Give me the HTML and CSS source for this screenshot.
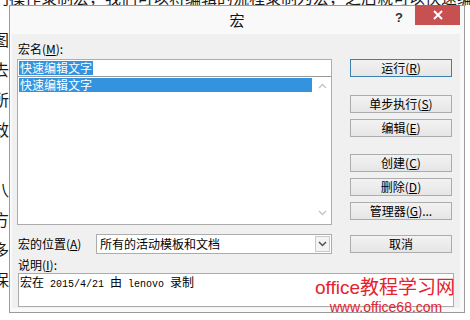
FILE: index.html
```html
<!DOCTYPE html>
<html lang="zh">
<head>
<meta charset="utf-8">
<title>宏</title>
<link rel="stylesheet" href="styles.css">
</head>
<body>
<div class="doc">
  <p class="doc-line top-line">门操作录制宏，我们可以将编辑的流程录制为宏，之后就可以快速编辑文字了。</p>
  <p class="doc-line">图</p>
  <p class="doc-line">去</p>
  <p class="doc-line">所</p>
  <p class="doc-line">效</p>
  <p class="doc-line">：</p>
  <p class="doc-line">八</p>
  <p class="doc-line">方</p>
  <p class="doc-line">多</p>
  <p class="doc-line">保</p>
</div>

<div class="dialog">
  <div class="titlebar">
    <span class="title">宏</span>
    <span class="help">?</span>
    <span class="close">
      <svg width="10" height="10" viewBox="0 0 10 10"><path d="M1 1L9 9M9 1L1 9" stroke="#fff" stroke-width="2" fill="none"/></svg>
    </span>
  </div>
  <div class="client">
    <div class="left-col">
      <div class="lbl name-lbl">宏名(<u>M</u>):</div>
      <div class="name-input"><span class="sel">快速编辑文字</span></div>
      <div class="list">
        <div class="list-items">
          <div class="list-item selected">快速编辑文字</div>
        </div>
        <div class="scrollbar">
          <svg class="arrow" width="9" height="6" viewBox="0 0 9 6"><path d="M1 5L4.5 1.5L8 5" stroke="#c4c4c4" stroke-width="1.4" fill="none"/></svg>
          <svg class="arrow" width="9" height="6" viewBox="0 0 9 6"><path d="M1 1L4.5 4.5L8 1" stroke="#c4c4c4" stroke-width="1.4" fill="none"/></svg>
        </div>
      </div>
    </div>
    <div class="right-col">
      <div class="btn default">运行(<u>R</u>)</div>
      <div class="btn gap-lg">单步执行(<u>S</u>)</div>
      <div class="btn">编辑(<u>E</u>)</div>
      <div class="btn gap-lg">创建(<u>C</u>)</div>
      <div class="btn">删除(<u>D</u>)</div>
      <div class="btn">管理器(<u>G</u>)...</div>
    </div>
    <div class="loc-row">
      <span class="lbl loc-lbl">宏的位置(<u>A</u>)</span>
      <div class="combo">
        <span class="combo-text">所有的活动模板和文档</span>
        <span class="combo-btn">
          <svg width="9" height="6" viewBox="0 0 9 6"><path d="M1 1L4.5 4.5L8 1" stroke="#505050" stroke-width="1.5" fill="none"/></svg>
        </span>
      </div>
    </div>
    <div class="cancel-cell">
      <div class="btn">取消</div>
    </div>
    <div class="desc-area">
      <div class="lbl desc-lbl">说明(<u>I</u>):</div>
      <div class="desc-box">宏在<span class="mono"> 2015/4/21 </span>由<span class="mono"> lenovo </span>录制</div>
    </div>
  </div>
  <div class="watermark">
    <div class="wm-big">office教程学习网</div>
    <div class="wm-small">www.office68.com</div>
  </div>
</div>
</body>
</html>
```

FILE: styles.css
```css
html, body {
  margin: 0;
  padding: 0;
  background: #ffffff;
  width: 470px;
  height: 320px;
  overflow: hidden;
  font-family: "Noto Sans CJK SC", "Liberation Sans", sans-serif;
}

.doc {
  margin-left: -7px;
  margin-top: -14px;
  color: #1a1a1a;
  font-size: 16px;
}

.doc-line {
  margin: 0;
  line-height: 30px;
  white-space: nowrap;
}

.top-line {
  line-height: 22px;
  margin-bottom: 16px;
}

.dialog {
  position: absolute;
  left: 9px;
  top: 5px;
  border: 1px solid #9b9b9b;
  background: #f9f9f9;
  padding: 0 4px 4px 2px;
  box-sizing: content-box;
  width: 448px;
  height: 302px;
}

.titlebar {
  position: relative;
  height: 28px;
}

.title {
  display: block;
  text-align: center;
  font-size: 15px;
  line-height: 28px;
  color: #111;
  padding-left: 2px;
}

.help {
  position: absolute;
  right: 57px;
  top: 4px;
  font-family: "Liberation Sans", sans-serif;
  font-weight: bold;
  font-size: 13px;
  color: #333;
}

.close {
  position: absolute;
  right: 0;
  top: -1px;
  width: 45px;
  height: 20px;
  background: #c75050;
  display: flex;
  align-items: center;
  justify-content: center;
}

.client {
  height: 274px;
  background: #f0f0f0;
  box-sizing: border-box;
  padding: 8px 0 0 5px;
  display: grid;
  grid-template-columns: 315px 102px;
  grid-template-rows: 183px auto auto;
  column-gap: 18px;
  font-size: 12px;
  color: #000;
}

.lbl u {
  text-decoration: underline;
  text-underline-offset: 1px;
}

.left-col {
  display: flex;
  flex-direction: column;
}

.name-lbl {
  height: 17px;
  line-height: 13px;
  padding-left: 1px;
}

.name-input {
  height: 18px;
  box-sizing: border-box;
  border: 1px solid #abadb3;
  border-bottom-color: #9a9a9a;
  background: #fff;
  padding: 1px 0 0 1px;
  line-height: 14px;
}

.sel {
  background: #3393df;
  color: #fff;
  display: inline-block;
  line-height: 14px;
  padding: 0 1px;
}

.list {
  flex: 1;
  display: flex;
  background: #fff;
  border: 1px solid #acacac;
  border-top: none;
  box-sizing: border-box;
}

.list-items {
  flex: 1;
  padding: 1px 2px 0 1px;
}

.list-item {
  height: 14px;
  line-height: 14px;
  padding-left: 1px;
}

.list-item.selected {
  background: #3393df;
  color: #fff;
}

.scrollbar {
  width: 17px;
  display: flex;
  flex-direction: column;
  justify-content: space-between;
  align-items: center;
  padding: 6px 0 8px;
}

.right-col {
  display: flex;
  flex-direction: column;
  gap: 6px;
  padding-top: 17px;
}

.btn {
  height: 18px;
  box-sizing: border-box;
  border: 1px solid #acacac;
  background: linear-gradient(#f2f2f2, #e6e6e6);
  text-align: center;
  line-height: 15px;
  font-size: 12px;
  color: #000;
}

.btn.default {
  border-color: #3c7fb1;
}

.btn.gap-lg {
  margin-top: 12px;
}

.btn.gap-lg:nth-child(4) {
  margin-top: 11px;
}

.loc-row {
  display: flex;
  align-items: center;
  padding-top: 8px;
}

.loc-lbl {
  width: 79px;
  padding-left: 1px;
  box-sizing: border-box;
}

.combo {
  flex: 1;
  height: 20px;
  box-sizing: border-box;
  border: 1px solid #acacac;
  background: #fff;
  display: flex;
  align-items: center;
}

.combo-text {
  flex: 1;
  padding-left: 3px;
  font-size: 12px;
}

.combo-btn {
  width: 15px;
  height: 16px;
  margin-right: 1px;
  box-sizing: border-box;
  border: 1px solid #c9c9c9;
  background: #f4f4f4;
  display: flex;
  align-items: center;
  justify-content: center;
}

.cancel-cell {
  padding-top: 10px;
}

.desc-area {
  grid-column: 1 / 3;
  padding-top: 4px;
}

.desc-lbl {
  height: 15px;
  line-height: 14px;
  padding-left: 1px;
}

.desc-box {
  width: 436px;
  height: 34px;
  margin-left: 1px;
  box-sizing: border-box;
  border: 1px solid #acacac;
  background: #fff;
  padding: 1px 0 0 1px;
  line-height: 14px;
  font-size: 12px;
}

.mono {
  font-family: "Liberation Mono", monospace;
  font-size: 10px;
}

.watermark {
  position: absolute;
  left: 305px;
  top: 271px;
  color: #e5232d;
  text-align: center;
  width: 140px;
}

.wm-big {
  font-family: "Liberation Sans", "Noto Sans CJK SC", sans-serif;
  font-size: 19px;
  line-height: 22px;
  white-space: nowrap;
}

.wm-small {
  font-family: "Liberation Sans", sans-serif;
  font-size: 14px;
  line-height: 14px;
  margin-top: 1px;
  margin-left: 2px;
}
```
